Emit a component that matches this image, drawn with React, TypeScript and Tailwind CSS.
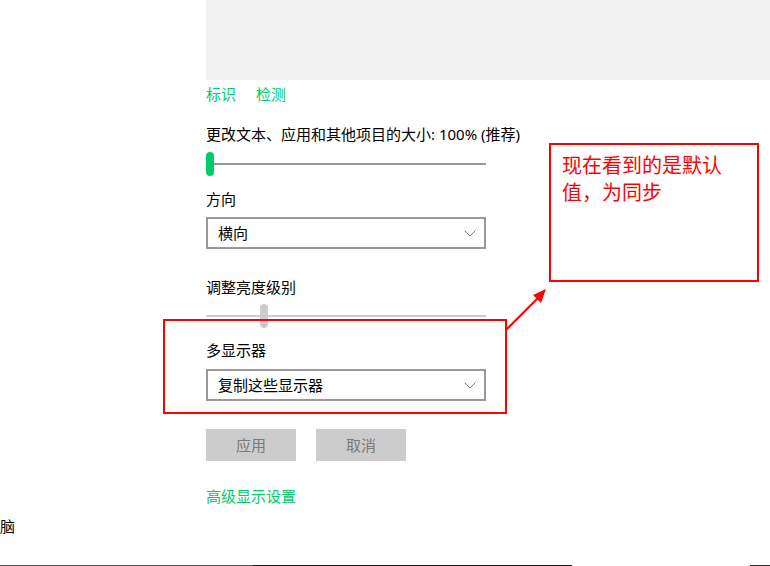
import React from "react";

const font = {
  fontFamily: '"Noto Sans", "Noto Sans CJK SC", sans-serif',
};

function Chevron() {
  return (
    <svg width="12" height="7" viewBox="0 0 12 7" fill="none">
      <path d="M0.5 0.5 L6 6 L11.5 0.5" stroke="#7a7a7a" strokeWidth="1" />
    </svg>
  );
}

function Dropdown({ value }: { value: string }) {
  return (
    <div className="flex h-[32px] w-[280px] items-center justify-between border-2 border-[#999999] pl-[10px] pr-[8px]">
      <span className="text-[15px] leading-[20px] text-black">{value}</span>
      <Chevron />
    </div>
  );
}

export default function App() {
  return (
    <div
      className="relative h-[566px] w-[770px] overflow-hidden bg-white text-black"
      style={font}
    >
      <div className="flex h-[565px]">
        {/* sidebar, mostly scrolled away */}
        <aside className="w-[206px] shrink-0 pt-[516px]">
          <span className="block text-[15px] leading-[20px]">脑</span>
        </aside>

        <main className="flex flex-1 flex-col text-[15px] leading-[20px]">
          <div className="h-[80px] w-full bg-[#f2f2f2]" />

          <div className="mt-[4px] flex gap-[20px] text-[#00cc6a]">
            <span>标识</span>
            <span>检测</span>
          </div>

          <p className="mt-[20px]">更改文本、应用和其他项目的大小: 100% (推荐)</p>

          <div className="mt-[8px] flex h-[24px] w-[280px] items-center">
            <div className="h-[24px] w-[8px] rounded-full bg-[#00cc6a]" />
            <div className="h-[2px] flex-1 bg-[#999999]" />
          </div>

          <p className="mt-[13px]">方向</p>
          <div className="mt-[8px]">
            <Dropdown value="横向" />
          </div>

          <p className="mt-[28px]">调整亮度级别</p>
          <div className="relative mt-[7px] flex h-[24px] w-[280px] items-center">
            <div className="h-[2px] w-full bg-[#cccccc]" />
            <div className="absolute left-[54px] top-0 h-[24px] w-[8px] rounded-full bg-[#cccccc]" />
          </div>

          <p className="mt-[12px]">多显示器</p>
          <div className="mt-[9px]">
            <Dropdown value="复制这些显示器" />
          </div>

          <div className="mt-[28px] flex gap-[20px]">
            <button className="h-[32px] w-[90px] bg-[#cccccc] text-[#7a7a7a]">应用</button>
            <button className="h-[32px] w-[90px] bg-[#cccccc] text-[#7a7a7a]">取消</button>
          </div>

          <p className="mt-[25px] text-[#00cc6a]">高级显示设置</p>
        </main>
      </div>

      {/* window bottom edge */}
      <div className="flex h-[1px]">
        <div className="w-[253px] bg-[#555555]" />
        <div className="w-[319px] bg-[#1a1a1a]" />
        <div className="w-[178px] bg-white" />
        <div className="flex-1 bg-[#333333]" />
      </div>

      {/* annotations */}
      <div className="absolute left-[163px] top-[319px] h-[95px] w-[344px] border-2 border-[#ff0000]" />

      <div className="absolute left-[549px] top-[143px] h-[139px] w-[210px] border-2 border-[#ff0000] pl-[11px] pt-[6px]">
        <p
          className="w-[170px] text-[20px] leading-[27px] text-[#ff0000]"
          style={{ fontFamily: '"Noto Sans CJK SC", sans-serif' }}
        >
          现在看到的是默认值，为同步
        </p>
      </div>

      <svg
        className="absolute left-[500px] top-[284px]"
        width="52"
        height="52"
        viewBox="0 0 52 52"
      >
        <line x1="6" y1="46" x2="40" y2="12" stroke="#ff0000" strokeWidth="2" />
        <polygon points="46,5 33,11 41,19" fill="#ff0000" />
      </svg>
    </div>
  );
}
